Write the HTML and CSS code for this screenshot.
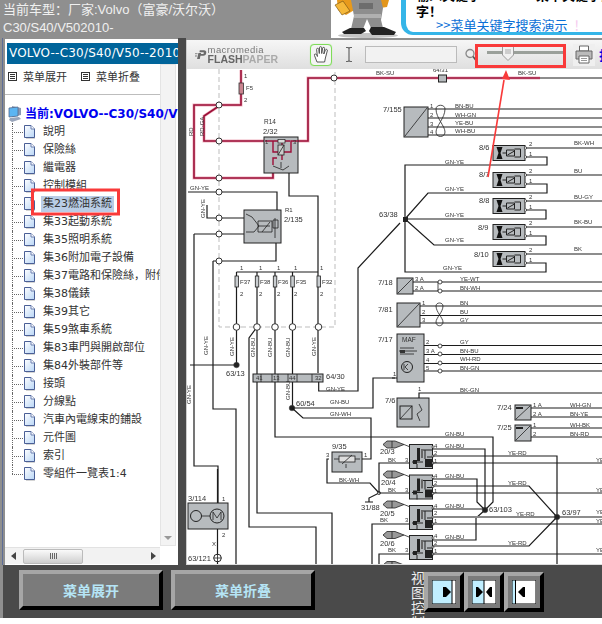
FILE: index.html
```html
<!DOCTYPE html>
<html lang="zh">
<head>
<meta charset="utf-8">
<title>Volvo C30/S40/V50 2010</title>
<link rel="stylesheet" href="styles.css">
</head>
<body>
<svg class="sprites" width="0" height="0" aria-hidden="true">
  <defs>
    <linearGradient id="docfill" x1="0" y1="0" x2="1" y2="1"><stop offset="0" stop-color="#ffffff"/><stop offset="1" stop-color="#b9d6f6"/></linearGradient>
    <symbol id="doc" viewBox="0 0 13 14">
      <path d="M3 3H12V14H3Z" fill="#b8b8b8" opacity=".6"/>
      <path d="M1.5 .5H8L11.5 4V12.5H1.5Z" fill="url(#docfill)" stroke="#4a5f96"/>
      <path d="M8 .5V4H11.5" fill="#fff" stroke="#6a7fb0"/>
    </symbol>
  </defs>
</svg>
<div class="page">
  <header class="top">
    <div class="car">当前车型：厂家:Volvo（富豪/沃尔沃）<br>C30/S40/V502010-</div>
    <div class="banner">
      <svg class="mascot" width="70" height="38" viewBox="0 0 70 38">
        <ellipse cx="37" cy="35.500" rx="30" ry="2.500" fill="#c4c4c4"/>
        <path d="M6 0H28L25 9 15 15 7 10Z" fill="#e89a1c"/>
        <path d="M4 5 12 1 19 11 11 15Z" fill="#f5b83a" stroke="#6a4a10" stroke-width=".6"/>
        <path d="M46 0H58L56 7 49 8Z" fill="#e3961c"/>
        <path d="M20 0H50L52 8 50 20 52 28H40L36 19 32 29H20L23 16Z" fill="#8e8e8e"/>
        <path d="M28 3H42V9H28Z" fill="#6d6d6d"/>
        <path d="M23 14H50L50 18H23Z" fill="#b0b0b0"/>
        <path d="M19 28H33L35 31 30 34 13 34 11 32Z" fill="#222"/>
        <path d="M40 27H53L65 32 63 35 41 35 38 31Z" fill="#222"/>
      </svg>
      <div class="bubble">
        <div class="clipline">输入关键字 <span class="gap"></span>菜单关键字搜</div>
        <div class="char">字！</div>
        <div class="linkrow"><span class="link">&gt;&gt;菜单关键字搜索演示</span><span class="pink">！</span></div>
      </div>
    </div>
  </header>

  <main class="main">
    <aside class="side">
      <div class="side-title">VOLVO--C30/S40/V50--2010年款</div>
      <div class="side-body">
        <div class="side-content">
          <div class="menu-row">
            <span class="menu-item"><i class="mini"></i>菜单展开</span>
            <span class="menu-item"><i class="mini"></i>菜单折叠</span>
          </div>
          <div class="sep"></div>
          <div class="root">
            <svg class="pc" width="14" height="18" viewBox="0 0 14 18">
              <path d="M4 1 13 3V10L4 12Z" fill="#8a9ab5"/>
              <path d="M1 3 10 2V11L1 12Z" fill="#5cb5f2" stroke="#56688c" stroke-width=".8"/>
              <path d="M2 13 11 12 13 14 4 17 1 15Z" fill="#9aa6bb"/>
            </svg>
            <b>当前:VOLVO--C30/S40/V50--2010</b>
          </div>
          <ul class="tree">
            <li><svg class="ic"><use href="#doc"/></svg><span>說明</span></li>
            <li><svg class="ic"><use href="#doc"/></svg><span>保險絲</span></li>
            <li><svg class="ic"><use href="#doc"/></svg><span>繼電器</span></li>
            <li><svg class="ic"><use href="#doc"/></svg><span>控制模組</span></li>
            <li><svg class="ic"><use href="#doc"/></svg><span class="sel">集23燃油系統</span></li>
            <li><svg class="ic"><use href="#doc"/></svg><span>集33起動系統</span></li>
            <li><svg class="ic"><use href="#doc"/></svg><span>集35照明系統</span></li>
            <li><svg class="ic"><use href="#doc"/></svg><span>集36附加電子設備</span></li>
            <li><svg class="ic"><use href="#doc"/></svg><span>集37電路和保險絲，附件</span></li>
            <li><svg class="ic"><use href="#doc"/></svg><span>集38儀錶</span></li>
            <li><svg class="ic"><use href="#doc"/></svg><span>集39其它</span></li>
            <li><svg class="ic"><use href="#doc"/></svg><span>集59煞車系統</span></li>
            <li><svg class="ic"><use href="#doc"/></svg><span>集83車門與開啟部位</span></li>
            <li><svg class="ic"><use href="#doc"/></svg><span>集84外裝部件等</span></li>
            <li><svg class="ic"><use href="#doc"/></svg><span>接頭</span></li>
            <li><svg class="ic"><use href="#doc"/></svg><span>分線點</span></li>
            <li><svg class="ic"><use href="#doc"/></svg><span>汽車內電線束的鋪設</span></li>
            <li><svg class="ic"><use href="#doc"/></svg><span>元件圖</span></li>
            <li><svg class="ic"><use href="#doc"/></svg><span>索引</span></li>
            <li><svg class="ic"><use href="#doc"/></svg><span>零組件一覽表1:4</span></li>
          </ul>
        </div>
        <div class="vscroll"><i class="arrow-down"></i></div>
      </div>
      <div class="hscroll">
        <i class="arrow-left"></i>
        <div class="thumb"><em></em><em></em><em></em><em></em></div>
        <i class="arrow-right"></i>
      </div>
    </aside>

    <div class="divider"></div>

    <section class="viewer">
      <div class="toolbar">
        <div class="logo">
          <svg width="17" height="18" viewBox="0 0 17 18"><path d="M7 2H13Q17 2 16.5 6T12 10H8L7 15H3L5 6H9L8.6 7.5H11.5Q13 7.5 13 6T11.5 5H6.5Z" fill="#6a6a6a"/><path d="M0 6H4L3.5 8H0ZM0 9.5H3L2.5 11.5H0Z" fill="#9a9a9a"/></svg>
          <div class="logo-text"><span class="lg1">macromedia</span><span class="lg2">FLASH<span class="lg3">PAPER</span></span></div>
        </div>
        <div class="hand">
          <svg width="16" height="17" viewBox="0 0 16 17"><path d="M4 16 1.5 9.5Q1 8 2.3 8T4 9.5L4.4 10.5 3.6 3.5Q3.6 2.3 4.6 2.3T5.8 3.5L6.3 7.5 6.5 1.7Q6.5 .7 7.6 .7T8.7 1.7L8.7 7.5 9.6 2.2Q9.8 1.2 10.8 1.4T11.6 2.5L10.8 8 12.4 4Q12.9 3 13.8 3.4T14.3 4.8L12.4 12 11.6 16Z" fill="#fff" stroke="#444" stroke-width=".9"/></svg>
        </div>
        <svg class="ibeam" width="8" height="15" viewBox="0 0 8 15"><path d="M1 .5H3L4 1.5 5 .5H7M1 14.5H3L4 13.5 5 14.5H7M4 1.5V13.5" fill="none" stroke="#666" stroke-width="1.2"/></svg>
        <div class="field"></div>
        <svg class="mag" width="12" height="14" viewBox="0 0 12 14"><circle cx="5" cy="5.5" r="4" fill="#eee" stroke="#888" stroke-width="1.3"/><path d="M8 8.5 11.5 13" stroke="#555" stroke-width="1.6"/></svg>
        <div class="slider"><div class="knob"><svg width="12" height="15" viewBox="0 0 12 15"><path d="M.5 .5H11.5V9L6 14.5.5 9Z" fill="#f1f1f1" stroke="#9a9a9a"/><path d="M4 3V8M6 3V8M8 3V8" stroke="#aaa"/></svg></div></div>
        <div class="print">
          <svg width="18" height="19" viewBox="0 0 18 19"><path d="M4.5 1H13.5V6H4.5Z" fill="#fff" stroke="#666"/><path d="M1 6H17V14H1Z" fill="#bbb" stroke="#666"/><path d="M4 11H14V18H4Z" fill="#fff" stroke="#666"/><path d="M6 13.500H12M6 15.500H12" stroke="#999"/></svg>
        </div>
        <b class="print-label">打印</b>
      </div>

      <svg class="schem" width="415" height="495" viewBox="187 69 415 495">
        <defs>
          <g id="rl">
            <rect x=".5" y=".5" width="32" height="15" fill="#b7bbbe" stroke="#222"/>
            <path d="M4 2H10L8 8 10 14H4L6 8Z" fill="#111"/>
            <path d="M10 8H14M14 5H22V11H14ZM15 10 22 6M22 4H28V12H22" fill="none" stroke="#222"/>
            <circle cx="33" cy="3" r="1.200" fill="#fff" stroke="#222" stroke-width=".6"/>
            <circle cx="33" cy="12" r="1.200" fill="#fff" stroke="#222" stroke-width=".6"/>
          </g>
          <g id="cl">
            <rect x=".5" y=".5" width="23" height="24" fill="#b4b8bb" stroke="#222"/>
            <rect x="8" y="4" width="3" height="13" fill="#222"/>
            <rect x="12" y="5" width="2" height="9" fill="#666"/>
            <rect x="16" y="15" width="7" height="8" fill="#222"/>
            <path d="M14 6H24M16 6V15M18 13H24M3 18H14M8 20V25" fill="none" stroke="#222"/>
            <rect x="4" y="16" width="4" height="4" fill="#222"/>
            <circle cx="24" cy="3" r="1.100" fill="#fff" stroke="#222" stroke-width=".6"/>
            <circle cx="24" cy="12" r="1.100" fill="#fff" stroke="#222" stroke-width=".6"/>
            <circle cx="24" cy="19" r="1.100" fill="#fff" stroke="#222" stroke-width=".6"/>
          </g>
          <g id="pl">
            <path d="M0 4 4 .5H12L21 4 12 7.500H4Z" fill="#999" stroke="#222" stroke-width=".8"/>
            <path d="M9 .5V7.500M21 4 26 6" fill="none" stroke="#222" stroke-width=".8"/>
          </g>
          <g id="redw">
            <path d="M241 70V105H194V178H273V165"/>
            <path d="M219 106 204 116V141H265"/>
            <path d="M298 141H308V78H540"/>
          </g>
        </defs>

        <path class="dash" d="M219 69V327H335V69"/>

        <use href="#redw" class="ro"/>
        <use href="#redw" class="ri"/>
        <path class="l" d="M540 78H602"/>
        <rect x="239" y="83" width="4.500" height="11" fill="#c9848f" stroke="#333" stroke-width=".8"/>

        <rect class="box" x="264" y="137" width="34" height="36"/>
        <path class="rw" d="M265 141H273V152H291V141H298M273 141H290M282 142V160M273 165V158H277"/>
        <rect x="278" y="139.500" width="7" height="3.500" fill="#ddd" stroke="#222" stroke-width=".7"/>
        <rect x="278" y="145" width="6" height="10" fill="#ccc" stroke="#222" stroke-width=".8"/>
        <path class="thin" d="M278 155 284 145M273 166 283 170 289 166M281 162V168"/>
        <path class="l" d="M289 173V196H318V373"/>

        <path class="l" d="M188 192H277V210M207 205V218H245M194 234H245M194 234V466H218V503"/>
        <path class="l" d="M213 261H276V243M213 261V409H236V564"/>

        <rect class="box" x="244" y="210" width="37" height="33"/>
        <path class="thin" d="M246 214 252 217 259 226 254 232 246 232M258 226H270M258 221H272V232H258ZM262 232 270 222M275 218V238M273 220H278V228H273Z"/>

        <path class="l" d="M236.500 272H318M236.500 272V365M257 272V513H332V564M275 272V437H493V502L485 510M292.500 272V408M190 365H236.500"/>
        <path class="l" d="M257 327 249 338V527H316V564"/>
        <g class="fuse">
          <rect x="235" y="276" width="3.500" height="11"/><rect x="255.300" y="276" width="3.500" height="11"/>
          <rect x="273.300" y="276" width="3.500" height="11"/><rect x="290.800" y="276" width="3.500" height="11"/>
          <rect x="317" y="276" width="3.500" height="11"/>
        </g>
        <g class="node">
          <circle cx="219" cy="105" r="3"/><circle cx="219" cy="141" r="3"/><circle cx="219" cy="178" r="3"/>
          <circle cx="219" cy="192" r="3"/><circle cx="219" cy="218" r="3"/><circle cx="219" cy="234" r="3"/>
          <circle cx="219" cy="261" r="3"/><circle cx="334" cy="78" r="3"/>
          <circle cx="236.500" cy="327" r="3.300"/><circle cx="257" cy="327" r="3.300"/><circle cx="275" cy="327" r="3.300"/>
          <circle cx="292.500" cy="327" r="3.300"/><circle cx="318.500" cy="327" r="3.300"/>
        </g>
        <circle class="blk" cx="236.500" cy="365" r="2.800"/>
        <circle class="blk" cx="292" cy="408" r="2.800"/>

        <rect class="box" x="253" y="374" width="70" height="8"/>
        <path class="thin" d="M261 374V382M272 374V382M278 374V382M288 374V382M297 374V382M312 374V382"/>
        <path class="l" d="M318.700 382V391H358V268L400 223"/>
        <path class="l" d="M292 408H373V378H395M292 408 303 418H371V459H360"/>

        <rect class="box" x="438.500" y="75" width="8" height="7"/>

        <rect class="box" x="404" y="107" width="24" height="30"/>
        <path class="thin" d="M405 136 427 108"/>
        <path class="l" d="M428 109H602M428 118H602M428 127H602M428 135H602"/>
        <path class="thin" d="M436 109C436 104 445 104 445 109 445 118 436 126 436 132 436 138 445 138 445 132 445 126 436 118 436 109Z"/>

        <use href="#rl" x="492.500" y="145"/><use href="#rl" x="492.500" y="172"/>
        <use href="#rl" x="492.500" y="198"/><use href="#rl" x="492.500" y="224"/><use href="#rl" x="492.500" y="251"/>
        <path class="l" d="M526 148H602M526 175H602M526 201H602M526 227H602M526 254H602"/>
        <path class="l" d="M526 157H547V165H405V272H546V263H526M526 184H547V193H428L405 219H546V210H526M526 236H546V245H434L405 219"/>
        <rect x="403" y="217" width="5" height="5" fill="#222"/>

        <rect class="box" x="397" y="278" width="16" height="16"/>
        <path class="thin" d="M398 293 412 279"/>
        <path class="l" d="M413 282H602M413 291H602"/>
        <path class="thin" d="M438 282V291"/><circle class="hollow" cx="440" cy="282" r="2"/><circle class="hollow" cx="440" cy="291" r="2"/>

        <rect class="box" x="397" y="303" width="23" height="24"/>
        <path class="thin" d="M398 326 419 304"/>
        <path class="l" d="M420 306H602M420 315.500H602M420 323H602"/>
        <path class="thin" d="M436 306C436 302 443 302 443 306 443 312 436 318 436 322 436 327 443 327 443 322 443 318 436 312 436 306Z"/>

        <rect class="box" x="397" y="334" width="27" height="48"/>
        <circle cx="407" cy="367" r="5.500" fill="none" stroke="#222"/>
        <path class="thin" d="M399 351H417M400 348H414M400 354H414M404 364V370M408 364 405 367 408 370"/>
        <rect x="400" y="350" width="5" height="3" fill="#333"/>
        <path class="l" d="M424 345.500H602M424 354.500H602M424 363.500H602M424 371H602M392 378H397"/>
        <circle class="hollow" cx="440" cy="346" r="2"/><circle class="hollow" cx="440" cy="354" r="2"/>
        <circle class="hollow" cx="440" cy="363" r="2"/><circle class="hollow" cx="440" cy="371" r="2"/>

        <rect class="box" x="397" y="398" width="32" height="29"/>
        <rect x="400" y="406" width="12" height="13" fill="none" stroke="#222"/>
        <path class="thin" d="M400 419 412 406M419 404 422 410 417 414 420 421"/>
        <path class="l" d="M419 398V393H602"/>

        <rect class="box" x="515" y="405" width="16" height="15"/>
        <path class="thin" d="M516 419 530 406"/><rect x="516" y="407" width="7" height="2" fill="#222"/>
        <path class="l" d="M531 408H602M531 417H602"/>
        <rect class="box" x="515" y="425" width="16" height="16"/>
        <path class="thin" d="M516 440 530 426"/><rect x="516" y="427" width="7" height="2" fill="#222"/>
        <path class="l" d="M531 428H602M531 437H602"/>

        <rect class="box" x="332" y="452" width="30" height="20"/>
        <rect x="339" y="456" width="16" height="6" fill="#ddd" stroke="#222" stroke-width=".8"/>
        <path class="thin" d="M334 459H339M355 459H360M342 464 352 455M346 464V468"/>
        <path class="l" d="M329 459H327V483H370L379 493M379 493 369 498V502M365 502H373"/>
        <circle class="hollow" cx="379" cy="493" r="1.500"/>

        <use href="#cl" x="409" y="444"/><use href="#cl" x="409" y="474.500"/>
        <use href="#cl" x="409" y="505"/><use href="#cl" x="409" y="535"/>
        <use href="#pl" x="383" y="440.500"/><use href="#pl" x="383" y="470.500"/>
        <use href="#pl" x="383" y="500.500"/><use href="#pl" x="383" y="531"/>
        <use href="#pl" x="383" y="561"/>

        <path class="l" d="M433 449H485V510M433 479H477V502L485 510M433 509H485M433 540H476V518L485 510"/>
        <path class="l" d="M433 456H557V564M433 486H529L557 517M433 546H529L557 517"/>
        <path d="M433 517H557" stroke="#888" stroke-width="2" fill="none"/>
        <path class="l" d="M557 517H602M433 463H602M433 493H602M433 524H602M433 554H602"/>
        <path class="l" d="M409 463H379V493M409 493H379M409 524H372V564M409 554H379V564"/>
        <circle class="blk" cx="485" cy="510" r="2.800"/>
        <circle class="blk" cx="557" cy="517" r="2.800"/>

        <rect class="box" x="188" y="503" width="40" height="26"/>
        <circle cx="196" cy="516" r="5.500" fill="#b7bbbe" stroke="#222"/>
        <circle cx="217" cy="516" r="7" fill="#b7bbbe" stroke="#222"/>
        <path class="thin" d="M202 516H210M213 520V512L217 518 221 512V520"/>
        <path class="l" d="M217.500 469V503M217.500 529V564"/>
        <circle cx="217.500" cy="558" r="3.800" fill="#fff" stroke="#222"/>
        <path class="thin" d="M213.700 558H221.300M217.500 554V562"/>

        <g class="t">
          <text x="264" y="124" class="s">R14</text><text x="263" y="134" class="m">2/32</text>
          <text x="246" y="90">F5</text><text x="244" y="78">1</text><text x="244" y="102">2</text>
          <text x="265" y="144">1</text><text x="293" y="144">3</text>
          <text x="285" y="212">R1</text><text x="284" y="222" class="m">2/135</text>
          <text x="190" y="190">GN-YE</text>
          <text x="376" y="75">BK-SU</text><text x="433" y="72">64/31</text><text x="518" y="75">BK-SU</text>
          <text x="383" y="112" class="m">7/155</text>
          <text x="430" y="108">1</text><text x="430" y="117">2</text><text x="430" y="126">3</text><text x="430" y="134">4</text>
          <text x="455" y="108">BN-BU</text><text x="455" y="117">WH-GN</text><text x="455" y="125">YE-BU</text><text x="455" y="133">WH-BU</text>
          <text x="479" y="150" class="m">8/6</text><text x="479" y="177" class="m">8/7</text><text x="479" y="203" class="m">8/8</text><text x="478" y="230" class="m">8/9</text><text x="474" y="257" class="m">8/10</text>
          <text x="529" y="146">2</text><text x="529" y="156">1</text><text x="529" y="173">2</text><text x="529" y="183">1</text><text x="529" y="199">2</text><text x="529" y="209">1</text><text x="529" y="225">2</text><text x="529" y="235">1</text><text x="529" y="252">2</text><text x="529" y="262">1</text>
          <text x="574" y="145">BK-WH</text><text x="574" y="173">BU</text><text x="574" y="199">BU-GY</text><text x="574" y="224">BK-BU</text><text x="574" y="251">BK</text>
          <text x="445" y="164">GN-YE</text><text x="445" y="191">GN-YE</text><text x="445" y="217">GN-YE</text><text x="445" y="242">GN-YE</text><text x="443" y="270">GN-YE</text>
          <text x="379" y="217" class="m">63/38</text>
          <text x="378" y="285" class="m">7/18</text><text x="378" y="312" class="m">7/81</text><text x="378" y="342" class="m">7/17</text><text x="385" y="403" class="m">7/6</text>
          <text x="415" y="281">3 A</text><text x="415" y="290">2 A</text>
          <text x="460" y="281">YE-WT</text><text x="460" y="290">BN-WH</text>
          <text x="422" y="305">1</text><text x="422" y="314">2</text><text x="422" y="322">3</text>
          <text x="460" y="305">BN</text><text x="460" y="314">BU</text><text x="460" y="322">GY</text>
          <text x="402" y="342" class="s">MAF</text>
          <text x="426" y="344">2</text><text x="426" y="353">3 A</text><text x="426" y="362">4</text><text x="426" y="370">5</text><text x="393" y="376">1</text>
          <text x="460" y="344">GY</text><text x="460" y="353">BN-BU</text><text x="460" y="361">WH-RD</text><text x="460" y="370">BN-GN</text>
          <text x="460" y="392">BK-GN</text><text x="418" y="391">1</text>
          <text x="497" y="410" class="m">7/24</text><text x="497" y="430" class="m">7/25</text>
          <text x="533" y="407">1 A</text><text x="533" y="416">2 A</text><text x="533" y="427">1</text><text x="533" y="436">2</text>
          <text x="570" y="407">WH-GN</text><text x="570" y="416">BN-YE</text><text x="570" y="427">WH-BK</text><text x="570" y="436">BN-RD</text>
          <text x="326" y="379" class="m">64/30</text><text x="256" y="380">41</text><text x="273" y="380">13</text><text x="289" y="380">44</text><text x="315" y="380">32</text>
          <text x="330" y="404">GN-BU</text><text x="330" y="416">GN-WH</text><text x="296" y="406" class="m">60/54</text>
          <text x="326" y="391">GN-YE</text>
          <text x="226" y="376" class="m">63/13</text>
          <text x="332" y="449" class="m">9/35</text><text x="326" y="457">3</text><text x="364" y="457">1</text>
          <text x="339" y="482">BK-WH</text><text x="361" y="510" class="m">31/88</text>
          <text x="380" y="454" class="m">20/3</text><text x="381" y="485" class="m">20/4</text><text x="380" y="516" class="m">20/5</text><text x="380" y="546" class="m">20/6</text>
          <text x="388" y="462">BK</text><text x="388" y="492">BK</text><text x="380" y="522">BK</text><text x="388" y="552">BK</text>
          <text x="405" y="462">3</text><text x="405" y="492">3</text><text x="405" y="522">3</text><text x="405" y="552">3</text>
          <text x="434" y="448">4</text><text x="434" y="455">2</text><text x="434" y="463">1</text>
          <text x="434" y="478">4</text><text x="434" y="485">2</text><text x="434" y="493">1</text>
          <text x="434" y="508">4</text><text x="434" y="515">2</text><text x="434" y="523">1</text>
          <text x="434" y="538">4</text><text x="434" y="545">2</text><text x="434" y="553">1</text>
          <text x="445" y="448">GN-BU</text><text x="445" y="478">GN-BU</text><text x="445" y="508">GN-BU</text><text x="445" y="539">GN-BU</text>
          <text x="445" y="436">GN-BU</text>
          <text x="508" y="455">YE-RD</text><text x="508" y="485">YE-RD</text><text x="516" y="516">YE-RD</text><text x="508" y="545">YE-RD</text>
          <text x="489" y="512" class="m">63/103</text><text x="562" y="515" class="m">63/97</text>
          <text x="596" y="462">YE</text><text x="596" y="492">YE</text><text x="596" y="514">YE</text><text x="596" y="523">YE</text><text x="596" y="552">YE</text>
          <text x="240" y="270">1</text><text x="259" y="270">1</text><text x="277" y="270">1</text><text x="294" y="270">1</text><text x="320" y="270">1</text>
          <text x="240" y="296">2</text><text x="259" y="296">2</text><text x="277" y="296">2</text><text x="294" y="296">2</text><text x="320" y="296">2</text>
          <text x="240" y="284">F37</text><text x="260" y="284">F38</text><text x="278" y="284">F36</text><text x="296" y="284">F35</text><text x="322" y="284">F32</text>
          <text x="188" y="501" class="m">3/114</text><text x="222" y="501">1</text><text x="222" y="537">2</text>
          <text x="212" y="546">X</text><text x="188" y="561" class="m">63/121</text>
          <text transform="rotate(-90 204 136)" x="204" y="136">RD-GA</text>
          <text transform="rotate(-90 193 136)" x="193" y="136">RD</text>
          <text transform="rotate(-90 208 355)" x="208" y="355">GN-YE</text>
          <text transform="rotate(-90 234 356)" x="234" y="356">GN-YE</text>
          <text transform="rotate(-90 255 357)" x="255" y="357">GN-BU</text>
          <text transform="rotate(-90 272 357)" x="272" y="357">GN-BU</text>
          <text transform="rotate(-90 290 357)" x="290" y="357">GN-BU</text>
          <text transform="rotate(-90 316 356)" x="316" y="356">GN-YE</text>
          <text transform="rotate(-90 290 400)" x="290" y="400">GN-BU</text>
          <text transform="rotate(-90 191 404)" x="191" y="404">GN-YE</text>
          <text transform="rotate(-90 205 218)" x="205" y="218">GN-YE</text>
        </g>
      </svg>
    </section>
  </main>

  <footer class="bottom">
    <button class="big">菜单展开</button>
    <button class="big">菜单折叠</button>
    <div class="view-label">视图控制</div>
    <div class="views">
      <button class="vbtn"><svg width="24" height="24" viewBox="0 0 24 24"><rect width="24" height="24" fill="#c0eeff"/><rect x="20" width="4" height="24" fill="#fff"/><path d="M20 0V24" stroke="#000"/><path d="M11 7V17H14L19 12 14 7Z" fill="#000"/><rect x="0" y="0" width="24" height="24" fill="none" stroke="#000" stroke-width="1"/></svg></button>
      <button class="vbtn"><svg width="24" height="24" viewBox="0 0 24 24"><rect width="12" height="24" fill="#c0eeff"/><rect x="12" width="12" height="24" fill="#fff"/><path d="M12 0V24" stroke="#000"/><path d="M4 7V17H6L11 12 6 7ZM20 7V17H18L14 12 18 7Z" fill="#000"/><rect width="24" height="24" fill="none" stroke="#000"/></svg></button>
      <button class="vbtn"><svg width="24" height="24" viewBox="0 0 24 24"><rect width="24" height="24" fill="#fff"/><rect width="3" height="24" fill="#c0eeff"/><path d="M3.500 0V24" stroke="#000"/><path d="M13 7V17H11L6 12 11 7Z" fill="#000"/><rect width="24" height="24" fill="none" stroke="#000"/></svg></button>
    </div>
  </footer>
</div>

<svg class="notes" width="602" height="624" viewBox="0 0 602 624" aria-hidden="true">
  <rect x="32.500" y="190" width="86" height="24" fill="none" stroke="#f93a3a" stroke-width="3"/>
  <rect x="476.500" y="45.500" width="88" height="21" fill="none" stroke="#f93a3a" stroke-width="3"/>
  <path d="M488 177 504 80" fill="none" stroke="#f93a3a" stroke-width="1.600"/>
  <path d="M506 70 510 80 502 79Z" fill="#f93a3a"/>
</svg>
</body>
</html>
```

FILE: styles.css
```css
* { box-sizing: border-box; }
html, body { margin: 0; padding: 0; background: #fff; }
body { position: relative; width: 602px; height: 624px; overflow: hidden; font-family: "Liberation Sans", "Noto Sans CJK SC", sans-serif; }
.sprites { position: absolute; }
.page { display: flex; flex-direction: column; width: 602px; height: 618px; background: #8f8f8f; }

/* top strip */
.top { display: flex; justify-content: space-between; height: 38px; flex: none; }
.car { padding: 1px 0 0 3px; font-size: 13px; line-height: 18px; color: #f0f0f0; white-space: nowrap; }
.banner { display: flex; width: 271px; height: 38px; background: #fff; overflow: hidden; }
.mascot { flex: none; }
.bubble { flex: 1; height: 35px; border-left: 5px solid #35b5e8; border-bottom: 3px solid #35b5e8; border-radius: 0 0 0 12px; padding-left: 10px; overflow: hidden; color: #000; font-family: "Noto Sans CJK SC", sans-serif; }
.clipline { margin-top: -13px; height: 16px; font-size: 13px; line-height: 16px; font-weight: 700; white-space: nowrap; }
.gap { display: inline-block; width: 52px; }
.char { height: 13px; margin-top: 1px; font-size: 13px; line-height: 13px; font-weight: 700; }
.linkrow { display: flex; height: 17px; margin-left: 20px; font-size: 13px; line-height: 16px; white-space: nowrap; }
.link { color: #0b6fd6; padding: 0 7px 0 4px; margin-left: -4px; border-bottom: 1px solid #1e6fe0; }
.pink { color: #f6cdf0; margin-left: -1px; }

/* main row */
.main { display: flex; flex: 1; min-height: 0; padding-left: 5px; background: linear-gradient(#5d6d96, #5d6d96) 2px 0 / 1px 100% no-repeat; }
.side { display: flex; flex: none; flex-direction: column; width: 173px; margin-top: 1px; padding-top: 4px; background: #fff; }
.side-title { flex: none; height: 21px; margin-left: 2px; padding-left: 2px; overflow: hidden; white-space: nowrap; background: #00649a; color: #fff; font: 12px/21px "DejaVu Sans", "Noto Sans CJK SC", sans-serif; letter-spacing: .2px; }
.side-body { position: relative; display: flex; flex: 1; min-height: 0; }
.side-content { flex: none; width: 155px; font: 11px/16px "DejaVu Sans", "Noto Sans CJK TC", sans-serif; color: #333; }
.menu-row { display: flex; gap: 14px; height: 16px; margin-top: 4px; padding-left: 3px; font-family: "Noto Sans CJK SC", sans-serif; white-space: nowrap; }
.menu-item { display: flex; align-items: center; }
.mini { width: 9px; height: 9px; margin-right: 6px; border: 1px solid #333; background: linear-gradient(#333 0 0) center 1px / 5px 1px no-repeat, linear-gradient(#333 0 0) center 3px / 5px 1px no-repeat, linear-gradient(#333 0 0) center 5px / 5px 1px no-repeat, #fff; }
.sep { height: 1px; margin-top: 10px; background: #bdbdbd; }
.root { position: relative; z-index: 1; display: flex; align-items: center; width: 173px; height: 18px; margin-top: 10px; padding-left: 3px; overflow: hidden; white-space: nowrap; color: #0000f0; font-size: 12px; }
.pc { flex: none; margin-right: 3px; }
.tree { list-style: none; margin: 0; padding: 0; }
.tree li { position: relative; display: flex; align-items: center; height: 18px; padding-left: 18px; overflow: hidden; white-space: nowrap; }
.tree li::before { content: ""; position: absolute; left: 7px; top: 9px; width: 11px; border-top: 1px dotted #666; }
.tree li::after { content: ""; position: absolute; left: 7px; top: 0; height: 18px; border-left: 1px dotted #666; }
.tree li:last-child::after { height: 9px; }
.ic { flex: none; width: 13px; height: 14px; margin-right: 7px; }
.sel { margin-left: -2px; padding: 0 2px; background: #b9cde6; }
.vscroll { position: relative; flex: none; width: 16px; margin-bottom: 1px; background: #f3f3f3; border: 1px solid #e4e4e4; }
.arrow-down { position: absolute; left: 3px; bottom: 5px; border: 4px solid transparent; border-top: 4px solid #999; border-bottom: 0; }
.hscroll { display: flex; align-items: center; flex: none; width: 155px; height: 17px; margin-bottom: 1px; padding: 0 4px 0 6px; background: #f2f2f2; border-top: 1px solid #e2e2e2; }
.arrow-left { border: 4px solid transparent; border-right: 5px solid #444; border-left: 0; }
.arrow-right { margin-left: auto; border: 4px solid transparent; border-left: 5px solid #444; border-right: 0; }
.thumb { display: flex; align-items: center; justify-content: center; gap: 1px; width: 60px; height: 15px; margin-left: 7px; border: 1px solid #bbb; border-radius: 2px; background: linear-gradient(#fafafa, #cfcfcf); }
.thumb em { width: 1px; height: 6px; background: #666; }

.divider { flex: none; width: 8px; background: #4a4a4a; }
.viewer { display: flex; flex: none; flex-direction: column; width: 416px; margin-top: 2px; border-left: 1px solid #ccc; border-bottom: 1px solid #ddd; background: #fff; }
.toolbar { display: flex; align-items: center; flex: none; height: 29px; padding-left: 8px; background: linear-gradient(#f6f6f6, #dfdfdf); overflow: hidden; white-space: nowrap; }
.toolbar > * { flex: none; }
.logo { display: flex; align-items: center; gap: 1px; width: 83px; color: #777; filter: blur(.25px); }
.logo-text { display: flex; flex-direction: column; line-height: 9.500px; }
.lg1 { font-size: 9.500px; color: #777; letter-spacing: .4px; }
.lg2 { font-size: 10.500px; font-weight: 700; color: #666; }
.lg3 { color: #aaa; }
.hand { display: flex; align-items: center; justify-content: center; width: 22px; height: 22px; margin-left: 32px; border: 1px solid #7fdc5a; border-radius: 4px; background: #f4f4f4; box-shadow: 0 0 1px #a5ea88; }
.ibeam { margin-left: 13px; }
.field { width: 92px; height: 17px; margin-left: 12px; border: 1px solid #bbb; background: #f2f2f2; }
.mag { margin-left: 8px; }
.slider { position: relative; width: 78px; height: 3px; margin-left: 10px; margin-top: -5px; background: #9aa09a; }
.knob { position: absolute; left: 15px; top: -5px; line-height: 0; }
.print { display: flex; align-items: center; justify-content: center; width: 22px; height: 22px; margin-left: 8px; background: #efefef; }
.print-label { margin-left: 4px; color: #0000e0; font: 700 13px "Noto Sans CJK SC", sans-serif; }

.schem { display: block; flex: none; background: #fff; filter: blur(.3px); }
.l { fill: none; stroke: #1c1c1c; stroke-width: 1.200; }
.thin { fill: none; stroke: #222; stroke-width: .8; }
.dash { fill: none; stroke: #bdbdbd; stroke-width: 1; stroke-dasharray: 5 3; }
.ro { fill: none; stroke: #efb2bf; stroke-width: 3; }
.ri { fill: none; stroke: #9c0f38; stroke-width: 1.600; }
.rw { fill: none; stroke: #9c0f38; stroke-width: 1.400; }
.box { fill: #b7bbbe; stroke: #222; stroke-width: 1; }
.fuse rect { fill: #c9cdd0; stroke: #222; stroke-width: .8; }
.node circle { fill: #fff; stroke: #333; stroke-width: 1; }
.blk { fill: #222; stroke: #444; stroke-width: .5; }
.hollow { fill: #fff; stroke: #222; stroke-width: .8; }
.t text { font: 6px "Liberation Sans", sans-serif; fill: #333; }
.t text.m { font-size: 7.500px; }
.t text.s { font-size: 6.500px; }

/* bottom bar */
.bottom { display: flex; flex: none; align-items: flex-start; height: 53px; margin-left: 3px; padding-left: 16px; overflow: hidden; background: #4a4a4a; }
.big { flex: none; width: 144px; height: 40px; margin: 5px 8px 0 0; padding: 0; border: 4px solid; border-color: #a6a6a6 #000 #000 #a6a6a6; background: #7b7b7b; color: #b5e4f5; font: 700 14px "Noto Sans CJK SC", sans-serif; }
.view-label { flex: none; width: 14px; height: 48px; margin: 5px 0 0 88px; overflow: hidden; font: 14px/15px "Noto Sans CJK SC", sans-serif; color: #eee; }
.views { display: flex; margin: 7px 0 0 -1px; }
.vbtn { display: flex; flex: none; align-items: center; justify-content: center; width: 40px; height: 40px; padding: 0; border: 4px solid; border-color: #a6a6a6 #000 #000 #a6a6a6; background: #7b7b7b; }

.notes { position: absolute; left: 0; top: 0; pointer-events: none; }
```
